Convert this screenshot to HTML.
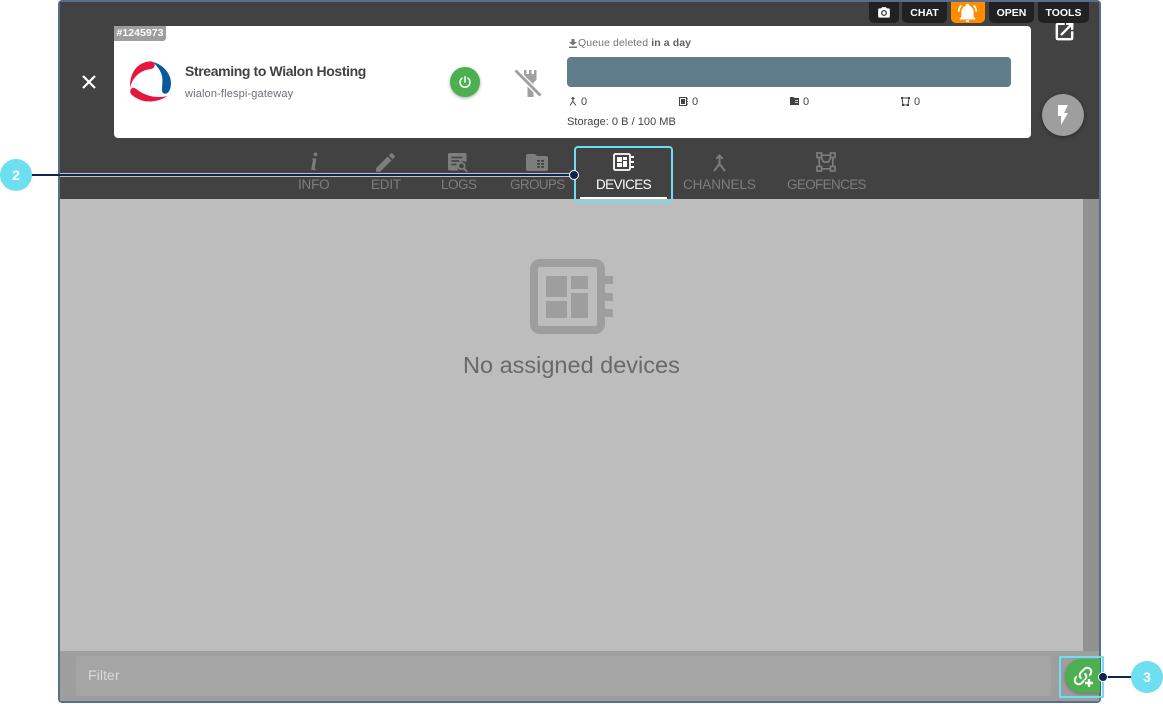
<!DOCTYPE html>
<html><head><meta charset="utf-8">
<style>
html,body{margin:0;padding:0;background:#fff}
body{width:1163px;height:704px;position:relative;overflow:hidden;font-family:"Liberation Sans",sans-serif}
.a{position:absolute}
.t{position:absolute;white-space:nowrap}
.btn{position:absolute;top:2px;height:21px;background:#212121;border-radius:0 0 5px 5px;color:#fff;font-weight:bold;font-size:10.5px;line-height:23px;text-align:center}
.tab{position:absolute;top:177px;height:16px;font-size:13.5px;line-height:16px;color:#7d7d7d;white-space:nowrap}
svg{position:absolute;overflow:visible}
.s{position:absolute;font-size:11px;color:#424242;white-space:nowrap;line-height:12px}
</style></head><body>
<div class="a" style="left:58px;top:0;width:1043px;height:703px;background:#5a6d8c;border-radius:4px"></div>
<div class="a" style="left:60px;top:2px;width:1039px;height:197px;background:#424242"></div>
<div class="a" style="left:60px;top:199px;width:1023px;height:452px;background:#bdbdbd"></div>
<div class="a" style="left:1083px;top:199px;width:16px;height:452px;background:#919191"></div>
<div class="a" style="left:60px;top:651px;width:1039px;height:50px;background:#9e9e9e"></div>
<div class="a" style="left:76px;top:656px;width:975px;height:40px;background:#a5a5a5;border-radius:3px"></div>
<div class="t" style="left:88px;top:667px;font-size:14px;line-height:16px;color:#dadada;letter-spacing:.1px">Filter</div>

<!-- open in new (under buttons) -->
<svg style="left:1053px;top:20px" width="23" height="23" viewBox="0 0 24 24"><path fill="#fff" stroke="#fff" stroke-width=".5" d="M14,3V5H17.59L7.76,14.83L9.17,16.24L19,6.41V10H21V3M19,19H5V5H12V3H5C3.89,3 3,3.9 3,5V19A2,2 0 0,0 5,21H19A2,2 0 0,0 21,19V12H19V19Z"/></svg>

<!-- top buttons -->
<div class="btn" style="left:869px;width:30px"></div>
<svg style="left:877px;top:6px" width="14" height="14" viewBox="0 0 24 24"><path fill="#fff" d="M4,4H7L9,2H15L17,4H20A2,2 0 0,1 22,6V18A2,2 0 0,1 20,20H4A2,2 0 0,1 2,18V6A2,2 0 0,1 4,4M12,7A5,5 0 0,0 7,12A5,5 0 0,0 12,17A5,5 0 0,0 17,12A5,5 0 0,0 12,7M12,9A3,3 0 0,1 15,12A3,3 0 0,1 12,15A3,3 0 0,1 9,12A3,3 0 0,1 12,9Z"/></svg>
<div class="btn" style="left:902px;width:45px">CHAT</div>
<div class="btn" style="left:951px;width:34px;background:#ff8c00"></div>
<svg style="left:957px;top:2px" width="21" height="21" viewBox="0 0 24 24"><path fill="#fff" d="M21,19V20H3V19L5,17V11C5,7.9 7.03,5.17 10,4.29C10,4.19 10,4.1 10,4A2,2 0 0,1 12,2A2,2 0 0,1 14,4C14,4.1 14,4.19 14,4.29C16.97,5.17 19,7.9 19,11V17L21,19M14,21A2,2 0 0,1 12,23A2,2 0 0,1 10,21M19.75,3.19L18.33,4.61C20.04,6.3 21,8.6 21,11H23C23,8.07 21.84,5.25 19.75,3.19M1,11H3C3,8.6 3.96,6.3 5.67,4.61L4.25,3.19C2.16,5.25 1,8.07 1,11Z"/></svg>
<div class="btn" style="left:989px;width:45px">OPEN</div>
<div class="btn" style="left:1038px;width:51px">TOOLS</div>

<!-- card -->
<div class="a" style="left:114px;top:26px;width:917px;height:112px;background:#fff;border-radius:0 4px 4px 4px"></div>
<div class="t" style="left:114px;top:26px;width:52px;height:15px;background:#9e9e9e;border-radius:0 0 3px 0;color:#fff;font-weight:bold;font-size:10.5px;line-height:15px;text-align:center;letter-spacing:.05px">#1245973</div>

<svg style="left:81px;top:74px" width="16" height="16" viewBox="0 0 16 16"><path stroke="#fff" stroke-width="2.200" fill="none" d="M2 2l12 12M14 2L2 14"/></svg>

<!-- logo -->
<svg style="left:129px;top:61px" width="43" height="42" viewBox="0 0 43 42">
<path fill="#e5173f" d="M20 .5C9 1.500 .5 11 1 27C3 17 11 9 22 8C26 7.500 27 2 24 1C23 .5 21.500 .3 20 .5Z"/>
<path fill="#e5173f" d="M2.500 27.500C.5 29.500 1 32.500 3 34C12 42 26 43 38.500 35C28 37.500 17 35.500 8 28.500C6 27 4 26 2.500 27.500Z"/>
<path fill="#0a5a9c" d="M24 1C33 3 42 12 42 22C42 26 41 30 38.500 32C36.500 33.500 33 32.500 33 29.500C33 24 34 20 33 15C32 10 28 5 24 1Z"/>
</svg>
<div class="t" style="left:185px;top:63px;font-size:14px;line-height:17px;font-weight:bold;color:#424242;letter-spacing:-.38px">Streaming to Wialon Hosting</div>
<div class="t" style="left:185px;top:87px;font-size:11px;line-height:14px;color:#6e7078;letter-spacing:.15px">wialon-flespi-gateway</div>

<!-- power -->
<div class="a" style="left:450px;top:67px;width:30px;height:30px;border-radius:50%;background:#4caf50;box-shadow:0 1px 3px rgba(0,0,0,.35)"></div>
<svg style="left:458px;top:75px" width="14" height="14" viewBox="0 0 14 14"><path fill="none" stroke="#fff" stroke-width="1.500" stroke-linecap="round" d="M7 1.500v5.500M4 3.200a5 5 0 1 0 6 0"/></svg>
<!-- plug off -->
<svg style="left:514px;top:69px" width="28" height="28" viewBox="0 0 28 28"><path fill="#a0a0a0" d="M10 1h2.500v4h2.500V1h2.500v4H20V1h2.500v10l-3 2.500V28h-6V13.500L10 11z"/><path fill="none" stroke="#fff" stroke-width="5.500" d="M3 3l22 22"/><path fill="none" stroke="#a0a0a0" stroke-width="3" d="M1.500 1.500l25 25"/></svg>

<!-- queue -->
<svg style="left:569px;top:39px" width="8" height="9" viewBox="0 0 8 9"><path fill="#757575" d="M2.500 0h3v3H8L4 6.500 0 3h2.500zM0 7.500h8V9H0z"/></svg>
<div class="t" style="left:578px;top:37px;font-size:10.5px;line-height:13px;color:#757575;letter-spacing:.1px">Queue deleted <b style="color:#616161">in a day</b></div>
<div class="a" style="left:567px;top:57px;width:444px;height:30px;background:#607d8b;border-radius:4px"></div>

<svg style="left:569px;top:97px" width="8" height="9" viewBox="0 0 8 9"><path fill="none" stroke="#424242" stroke-width="1" d="M4 1v3L1 8.500M4 4.500l3 4M2.500 2L4 .5 5.500 2"/></svg>
<div class="s" style="left:581px;top:96px">0</div>
<svg style="left:679px;top:97px" width="9" height="9" viewBox="0 0 9 9"><rect x=".5" y=".5" width="7" height="8" fill="none" stroke="#424242"/><rect x="2" y="2" width="4" height="5" fill="#424242"/><path stroke="#424242" d="M8 2h1M8 4.500h1M8 7h1"/></svg>
<div class="s" style="left:692px;top:96px">0</div>
<svg style="left:790px;top:97px" width="9" height="8" viewBox="0 0 9 8"><path fill="#424242" d="M0 0h3.500l1 1H9v7H0z"/><path fill="#fff" d="M5 3h3v.8H5zM5 5h3v.8H5z"/></svg>
<div class="s" style="left:803px;top:96px">0</div>
<svg style="left:901px;top:97px" width="9" height="9" viewBox="0 0 9 9"><path fill="none" stroke="#424242" d="M1 1h7L7 8H2z"/><path fill="#424242" d="M0 0h2v2H0zM7 0h2v2H7zM1 7h2v2H1zM6 7h2v2H6z"/></svg>
<div class="s" style="left:914px;top:96px">0</div>
<div class="s" style="left:567px;top:116px;letter-spacing:.03px">Storage: 0 B / 100 MB</div>

<!-- flash -->
<div class="a" style="left:1042px;top:94px;width:42px;height:42px;border-radius:50%;background:#9e9e9e;box-shadow:0 1px 4px rgba(0,0,0,.4)"></div>
<svg style="left:1051px;top:103px" width="24" height="24" viewBox="0 0 24 24"><path fill="#fff" d="M7,2V13H10V22L17,10H13L17,2H7Z"/></svg>

<!-- tabs -->
<svg style="left:308px;top:153px" width="12" height="18" viewBox="0 0 12 18"><text x="6" y="17" text-anchor="middle" font-family="Liberation Serif" font-style="italic" font-weight="bold" font-size="25" fill="#7d7d7d">i</text></svg>
<div class="tab" style="left:298px;letter-spacing:-.2px">INFO</div>
<svg style="left:373px;top:150px" width="25" height="25" viewBox="0 0 24 24"><path fill="#7d7d7d" d="M20.71,7.04C21.1,6.65 21.1,6 20.71,5.63L18.37,3.29C18,2.9 17.35,2.9 16.96,3.29L15.12,5.12L18.87,8.87M3,17.25V21H6.750L17.81,9.93L14.06,6.18L3,17.25Z"/></svg>
<div class="tab" style="left:371px;letter-spacing:-.2px">EDIT</div>
<svg style="left:448px;top:153px" width="21" height="20" viewBox="0 0 21 20"><path fill="#7d7d7d" d="M1.500 0H17a1.500 1.500 0 0 1 1.500 1.500V9a6 6 0 0 0-8 8.500H1.500A1.500 1.500 0 0 1 0 16V1.500A1.500 1.500 0 0 1 1.500 0z"/><path stroke="#424242" stroke-width="1.500" d="M3.500 4.500h11M3.500 8h8M3.500 11.500h5"/><circle cx="13.500" cy="13" r="3.200" fill="none" stroke="#7d7d7d" stroke-width="1.700"/><path stroke="#7d7d7d" stroke-width="2" d="M15.800 15.300l3.500 3.500"/></svg>
<div class="tab" style="left:441px;letter-spacing:-.5px">LOGS</div>
<svg style="left:526px;top:154px" width="22" height="17" viewBox="0 0 22 17"><path fill="#7d7d7d" d="M2 0h7l2 2h9a2 2 0 0 1 2 2v11a2 2 0 0 1-2 2H2a2 2 0 0 1-2-2V2a2 2 0 0 1 2-2z"/><path fill="#424242" d="M11 6h3v1.700h-3zM15 6h3v1.700h-3zM11 9h3v1.700h-3zM15 9h3v1.700h-3zM11 12h3v1.700h-3zM15 12h3v1.700h-3z"/></svg>
<div class="tab" style="left:510px;letter-spacing:-.65px">GROUPS</div>

<svg style="left:613px;top:153px" width="21" height="18" viewBox="0 0 21 18"><rect x="1" y="1" width="16" height="16" rx="1.500" fill="none" stroke="#fff" stroke-width="1.800"/><path fill="#fff" d="M4 4h5v5H4zM10 4h4v3h-4zM4 10h5v4H4zM10 8h4v6h-4zM18 3h3v2h-3zM18 8h3v2h-3zM18 13h3v2h-3z"/></svg>
<div class="tab" style="left:596px;color:#fff;letter-spacing:-.6px">DEVICES</div>
<div class="a" style="left:580px;top:197px;width:87px;height:2px;background:#fff"></div>

<svg style="left:712px;top:154px" width="15" height="18" viewBox="0 0 15 18"><path fill="none" stroke="#7d7d7d" stroke-width="2" d="M7.500 2v8L2 17M7.500 10l5.500 7M4.200 4.800L7.500 1.500l3.300 3.300"/></svg>
<div class="tab" style="left:683px;letter-spacing:-.1px">CHANNELS</div>
<svg style="left:816px;top:152px" width="20" height="20" viewBox="0 0 20 20"><g fill="none" stroke="#7d7d7d" stroke-width="1.700"><rect x="1" y="1" width="4.500" height="4.500"/><rect x="14.500" y="1" width="4.500" height="4.500"/><rect x="1" y="14.500" width="4.500" height="4.500"/><rect x="14.500" y="14.500" width="4.500" height="4.500"/><path d="M5.500 3.200h9M5.500 16.800h9M3.200 5.500v9M16.800 5.500v9M5 5l2.500 5h5L15 5"/></g></svg>
<div class="tab" style="left:787px;letter-spacing:-.65px">GEOFENCES</div>

<div class="a" style="left:574px;top:146px;width:95px;height:53px;border:2px solid #6ddff0;border-radius:4px"></div>

<!-- empty state -->
<svg style="left:530px;top:259px" width="84" height="75" viewBox="0 0 84 75"><rect x="4" y="4" width="67" height="67" rx="6" fill="none" stroke="#9e9e9e" stroke-width="8"/><path fill="#9e9e9e" d="M16 17h21v21H16zM41 17h17v13H41zM16 42h21v17H16zM41 34h17v25H41zM75 17h8v8h-8zM75 34h8v8h-8zM75 50h8v8h-8z"/></svg>
<div class="t" style="left:463px;top:350px;font-size:23.5px;line-height:30px;color:#696969">No assigned devices</div>

<!-- green button -->
<div class="a" style="left:1065px;top:659px;width:35px;height:34px;background:#4caf50;border-radius:17px 0 0 17px;box-shadow:0 1px 3px rgba(0,0,0,.3)"></div>
<svg style="left:1071px;top:664px" width="24" height="24" viewBox="0 0 24 24"><path fill="#fff" d="M10.59,13.41C11,13.8 11,14.44 10.59,14.83C10.2,15.22 9.56,15.22 9.17,14.83C7.22,12.88 7.22,9.71 9.17,7.76L12.71,4.22C14.66,2.27 17.83,2.27 19.78,4.22C21.73,6.17 21.73,9.34 19.78,11.29L18.29,12.78C18.3,11.96 18.17,11.14 17.89,10.36L18.36,9.88C19.54,8.71 19.54,6.81 18.36,5.64C17.19,4.46 15.29,4.46 14.12,5.64L10.59,9.17C9.41,10.34 9.41,12.24 10.59,13.41M13.41,9.17C13.8,8.78 14.44,8.78 14.83,9.17C16.78,11.12 16.78,14.29 14.83,16.24L11.29,19.78C9.34,21.73 6.17,21.73 4.22,19.78C2.27,17.83 2.27,14.66 4.22,12.71L5.71,11.22C5.7,12.04 5.83,12.86 6.11,13.65L5.64,14.12C4.46,15.29 4.46,17.19 5.64,18.36C6.81,19.54 8.71,19.54 9.88,18.36L13.41,14.83C14.59,13.66 14.59,11.76 13.41,10.59C13,10.2 13,9.56 13.41,9.17Z"/><path stroke="#4caf50" stroke-width="6" d="M18 14.500v9M13.500 19h9"/><path stroke="#fff" stroke-width="2.400" d="M18 15v8M14 19h8"/></svg>
<div class="a" style="left:1059px;top:656px;width:41px;height:38px;border:2px solid #6ddff0;border-radius:1px"></div>

<!-- annotation 2 -->
<div class="a" style="left:60px;top:173px;width:514px;height:4px;background:#e4e4e4;opacity:.8"></div>
<div class="a" style="left:30px;top:174px;width:544px;height:2px;background:#0d2650"></div>
<div class="a" style="left:0;top:159px;width:32px;height:32px;border-radius:50%;background:#6ddff0;color:#fff;font-weight:bold;font-size:14px;line-height:32px;text-align:center">2</div>
<div class="a" style="left:569px;top:170px;width:8px;height:8px;border-radius:50%;background:#0d2650;border:1px solid #fff"></div>

<!-- annotation 3 -->
<div class="a" style="left:1103px;top:676px;width:30px;height:2px;background:#0d2650"></div>
<div class="a" style="left:1131px;top:661px;width:32px;height:32px;border-radius:50%;background:#6ddff0;color:#fff;font-weight:bold;font-size:14px;line-height:32px;text-align:center">3</div>
<div class="a" style="left:1098px;top:672px;width:8px;height:8px;border-radius:50%;background:#0d2650;border:1px solid #fff"></div>
</body></html>
